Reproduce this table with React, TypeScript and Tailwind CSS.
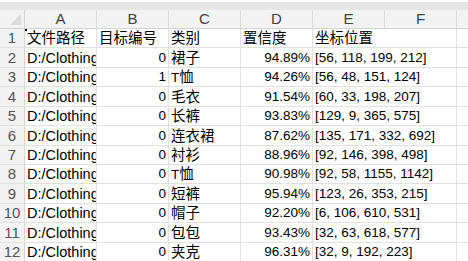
import React from "react";

const cn = "'Liberation Sans', 'Noto Sans CJK SC', sans-serif";
const zh = "'Noto Sans CJK SC', 'Liberation Sans', sans-serif";

const rows: [string, string, string, string, string][] = [
  ["D:/Clothing", "0", "裙子", "94.89%", "[56, 118, 199, 212]"],
  ["D:/Clothing", "1", "T恤", "94.26%", "[56, 48, 151, 124]"],
  ["D:/Clothing", "0", "毛衣", "91.54%", "[60, 33, 198, 207]"],
  ["D:/Clothing", "0", "长裤", "93.83%", "[129, 9, 365, 575]"],
  ["D:/Clothing", "0", "连衣裙", "87.62%", "[135, 171, 332, 692]"],
  ["D:/Clothing", "0", "衬衫", "88.96%", "[92, 146, 398, 498]"],
  ["D:/Clothing", "0", "T恤", "90.98%", "[92, 58, 1155, 1142]"],
  ["D:/Clothing", "0", "短裤", "95.94%", "[123, 26, 353, 215]"],
  ["D:/Clothing", "0", "帽子", "92.20%", "[6, 106, 610, 531]"],
  ["D:/Clothing", "0", "包包", "93.43%", "[32, 63, 618, 577]"],
  ["D:/Clothing", "0", "夹克", "96.31%", "[32, 9, 192, 223]"],
];

const heights = [19, 20, 19, 20, 19, 20, 19, 19, 20, 19, 20, 19];

function Zh({ t }: { t: string }) {
  const m = t.match(/^([A-Za-z]*)(.*)$/);
  const latin = m ? m[1] : "";
  const rest = m ? m[2] : t;
  return (
    <span className="whitespace-nowrap leading-[18px]">
      {latin && (
        <span style={{ fontFamily: cn }} className="text-[13.5px] leading-[18px]">
          {latin}
        </span>
      )}
      <span style={{ fontFamily: zh }} className="text-[14.5px] leading-[18px]">
        {rest}
      </span>
    </span>
  );
}

function Cell({
  children,
  w,
  align = "left",
  clip = false,
}: {
  children?: React.ReactNode;
  w: string;
  align?: "left" | "right";
  clip?: boolean;
}) {
  return (
    <div
      className={`${w} shrink-0 h-full border-r border-[#e1e1e1] flex items-center whitespace-nowrap leading-[16px] ${
        clip ? "overflow-hidden" : ""
      } ${align === "right" ? "justify-end pr-[2px]" : "justify-start pl-[2px]"}`}
    >
      {children}
    </div>
  );
}

export default function App() {
  const cols = ["A", "B", "C", "D", "E", "F"];
  return (
    <div
      className="w-[468px] h-[261px] bg-white overflow-hidden text-black text-[13.5px] leading-[16px]"
      style={{ fontFamily: cn }}
    >
      <div className="h-[2px] bg-white" />
      <div className="h-[8px] bg-[#e6e6e6]" />
      {/* column header */}
      <div className="flex h-[19px] bg-[#f3f3f3] border-b border-[#d4d4d4]">
        <div className="w-[25px] shrink-0 h-full border-r border-[#d4d4d4] relative">
          <div className="absolute right-[3px] bottom-[3px] w-0 h-0 border-l-[11px] border-l-transparent border-b-[11px] border-b-[#dcdcdc]" />
        </div>
        {cols.map((c) => (
          <div
            key={c}
            className="w-[72px] shrink-0 h-full border-r border-[#dadada] flex items-center justify-center text-[15px] text-[#444]"
          >
            {c}
          </div>
        ))}
        <div className="flex-1" />
      </div>
      {/* header row 1 */}
      <div className="flex border-b border-[#e1e1e1]" style={{ height: heights[0] }}>
        <div className="w-[25px] shrink-0 h-full bg-[#f3f3f3] border-r border-[#d4d4d4] flex items-center justify-center text-[15px] text-[#555]">
          1
        </div>
        <div className="relative w-[72px] shrink-0 h-full border-r border-[#e1e1e1] flex items-center pl-[2px]">
          <div className="absolute left-0 top-0 w-[2px] h-[2px] bg-black" />
          <Zh t="文件路径" />
        </div>
        <Cell w="w-[72px]">
          <Zh t="目标编号" />
        </Cell>
        <Cell w="w-[72px]">
          <Zh t="类别" />
        </Cell>
        <Cell w="w-[72px]">
          <Zh t="置信度" />
        </Cell>
        <div className="w-[72px] shrink-0 h-full flex items-center pl-[2px] whitespace-nowrap">
          <Zh t="坐标位置" />
        </div>
        <Cell w="w-[72px]" />
        <div className="flex-1 h-full" />
      </div>
      {rows.map((r, i) => (
        <div
          key={i}
          className="flex border-b border-[#e1e1e1]"
          style={{ height: heights[i + 1] }}
        >
          <div className="w-[25px] shrink-0 h-full bg-[#f3f3f3] border-r border-[#d4d4d4] flex items-center justify-center text-[15px] text-[#555]">
            {i + 2}
          </div>
          <Cell w="w-[72px]" clip>
            <span className="text-[14.5px]">{r[0]}</span>
          </Cell>
          <Cell w="w-[72px]" align="right">
            {r[1]}
          </Cell>
          <Cell w="w-[72px]">
            <Zh t={r[2]} />
          </Cell>
          <Cell w="w-[72px]" align="right">
            {r[3]}
          </Cell>
          <div className="w-[72px] shrink-0 h-full flex items-center pl-[2px] whitespace-nowrap">
            {r[4]}
          </div>
          <div className="w-[72px] shrink-0 h-full border-r border-[#e1e1e1]" />
          <div className="flex-1 h-full" />
        </div>
      ))}
    </div>
  );
}
